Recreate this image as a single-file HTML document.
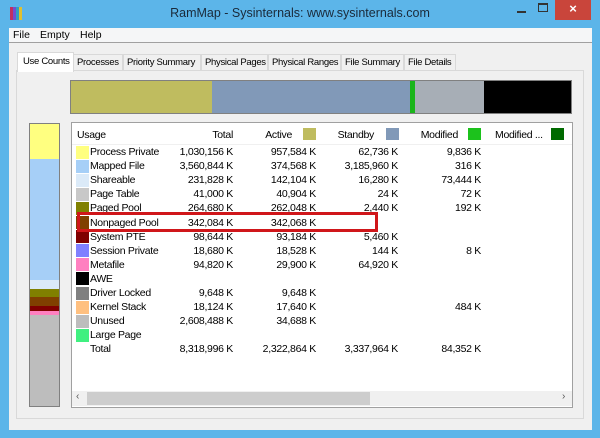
<!DOCTYPE html>
<html><head><style>
*{margin:0;padding:0;box-sizing:border-box}
body{width:600px;height:438px;background:#5cb5e9;font-family:"Liberation Sans",sans-serif;font-size:10.5px;color:#000;position:relative;overflow:hidden}
.a{position:absolute;white-space:nowrap}
.r{position:absolute;text-align:right;white-space:nowrap}
.t{position:absolute;white-space:nowrap;height:17px;border:1px solid #d9d9d9;background:#f0f0f0;padding:2px 0 0 3px;font-size:9.5px;letter-spacing:-0.3px;top:54px;overflow:hidden}
#rows div,.h{letter-spacing:-0.3px}
</style></head><body>
<div class="a" style="left:10px;top:7px;width:3px;height:13px;background:#c03060"></div>
<div class="a" style="left:13px;top:7px;width:3px;height:13px;background:#7050d0"></div>
<div class="a" style="left:16px;top:7px;width:3px;height:13px;background:#30a0c0"></div>
<div class="a" style="left:19px;top:7px;width:3px;height:13px;background:#e0c030"></div>
<div class="a" style="left:0;top:6px;width:600px;text-align:center;font-size:12.5px;color:#1a2a3a">RamMap - Sysinternals: www.sysinternals.com</div>
<div class="a" style="left:517px;top:11px;width:9px;height:2px;background:#333"></div>
<div class="a" style="left:538px;top:3px;width:10px;height:9px;border:1px solid #333;border-top-width:2px"></div>
<div class="a" style="left:555px;top:0;width:36px;height:20px;background:#c9453b;color:#fff;text-align:center;font-size:13px;line-height:18px;font-weight:bold">×</div>
<div class="a" style="left:9px;top:28px;width:583px;height:402px;background:#f0f0f0"></div>
<div class="a" style="left:9px;top:28px;width:583px;height:15px;background:#f5f6f7;border-bottom:1px solid #a0a0a0"></div>
<div class="a" style="left:13px;top:29px">File</div>
<div class="a" style="left:40px;top:29px">Empty</div>
<div class="a" style="left:80px;top:29px">Help</div>
<div class="a" style="left:16px;top:70px;width:568px;height:349px;border:1px solid #d9d9d9;background:#fff"></div>
<div class="a" style="left:17px;top:71px;width:566px;height:347px;background:#f0f0f0"></div>
<div class="t" style="left:73px;width:50px">Processes</div>
<div class="t" style="left:123px;width:78px">Priority Summary</div>
<div class="t" style="left:201px;width:67px">Physical Pages</div>
<div class="t" style="left:268px;width:73px">Physical Ranges</div>
<div class="t" style="left:341px;width:63px">File Summary</div>
<div class="t" style="left:404px;width:52px">File Details</div>
<div class="t" style="left:17px;top:52px;width:57px;height:20px;border-bottom:none;background:#fff;padding:3px 0 0 5px">Use Counts</div>
<div class="a" style="left:70px;top:80px;width:502px;height:34px;border:1px solid #808080;display:flex">
<div style="width:141px;background:#bfbc5f"></div><div style="width:198px;background:#8199b8"></div><div style="width:5px;background:#1ab51a"></div><div style="width:69px;background:#a7aeb6"></div><div style="flex:1;background:#000"></div></div>
<div class="a" style="left:29px;top:123px;width:31px;height:284px;border:1px solid #808080;background:#bdbdbd">
<div style="height:35px;background:#ffff80"></div><div style="height:121px;background:#a6cff7"></div><div style="height:9px;background:#dbeaf8"></div><div style="height:8px;background:#808000"></div><div style="height:9px;background:#804000"></div><div style="height:5px;background:#800000"></div><div style="height:4px;background:#ff80c0"></div></div>
<div class="a" style="left:71px;top:122px;width:502px;height:286px;border:1px solid #a0a0a0;background:#fff"></div>
<div class="a" style="left:72px;top:123px;width:500px;height:22px;background:#fff;border-bottom:1px solid #f0f0f0"></div>
<div class="a h" style="left:77px;top:129px">Usage</div>
<div class="r h" style="left:150px;top:129px;width:83px">Total</div>
<div class="r h" style="left:230px;top:129px;width:62px">Active</div>
<div class="a" style="left:303px;top:128px;width:13px;height:12px;background:#bfbc5f"></div>
<div class="r h" style="left:300px;top:129px;width:74px">Standby</div>
<div class="a" style="left:386px;top:128px;width:13px;height:12px;background:#8199b8"></div>
<div class="r h" style="left:390px;top:129px;width:68px">Modified</div>
<div class="a" style="left:468px;top:128px;width:13px;height:12px;background:#1cc21c"></div>
<div class="a h" style="left:495px;top:129px">Modified ...</div>
<div class="a" style="left:551px;top:128px;width:13px;height:12px;background:#006a00"></div>
<div id="rows"></div>
<script>
var d=[["Process Private","#ffff80","1,030,156 K","957,584 K","62,736 K","9,836 K"],
["Mapped File","#a6cff7","3,560,844 K","374,568 K","3,185,960 K","316 K"],
["Shareable","#dbeaf8","231,828 K","142,104 K","16,280 K","73,444 K"],
["Page Table","#c8c8c8","41,000 K","40,904 K","24 K","72 K"],
["Paged Pool","#808000","264,680 K","262,048 K","2,440 K","192 K"],
["Nonpaged Pool","#804000","342,084 K","342,068 K","",""],
["System PTE","#800000","98,644 K","93,184 K","5,460 K",""],
["Session Private","#8080ff","18,680 K","18,528 K","144 K","8 K"],
["Metafile","#ff80c0","94,820 K","29,900 K","64,920 K",""],
["AWE","#000000","","","",""],
["Driver Locked","#808080","9,648 K","9,648 K","",""],
["Kernel Stack","#ffc080","18,124 K","17,640 K","","484 K"],
["Unused","#bdbdbd","2,608,488 K","34,688 K","",""],
["Large Page","#40f080","","","",""],
["Total","","8,318,996 K","2,322,864 K","3,337,964 K","84,352 K"]];
var h="";d.forEach(function(r,i){var y=145+i*14.1;
if(r[1])h+='<div class="a" style="left:76px;top:'+(y+0.5)+'px;width:13px;height:13px;background:'+r[1]+'"></div>';
h+='<div class="a" style="left:90px;top:'+(y+1)+'px">'+r[0]+'</div>';
h+='<div class="r" style="left:130px;top:'+(y+1)+'px;width:103px">'+r[2]+'</div>';
h+='<div class="r" style="left:230px;top:'+(y+1)+'px;width:86px">'+r[3]+'</div>';
h+='<div class="r" style="left:310px;top:'+(y+1)+'px;width:88px">'+r[4]+'</div>';
h+='<div class="r" style="left:400px;top:'+(y+1)+'px;width:81px">'+r[5]+'</div>';});
document.getElementById("rows").innerHTML=h;
</script>
<div class="a" style="left:77px;top:212px;width:301px;height:20px;border:3px solid #d0161a"></div>
<div class="a" style="left:72px;top:391px;width:500px;height:15px;background:#f0f0f0"></div>
<div class="a" style="left:87px;top:392px;width:283px;height:13px;background:#cdcdcd"></div>
<div class="a" style="left:76px;top:391px;font-size:10px;color:#555">‹</div>
<div class="a" style="left:562px;top:391px;font-size:10px;color:#555">›</div>
</body></html>
